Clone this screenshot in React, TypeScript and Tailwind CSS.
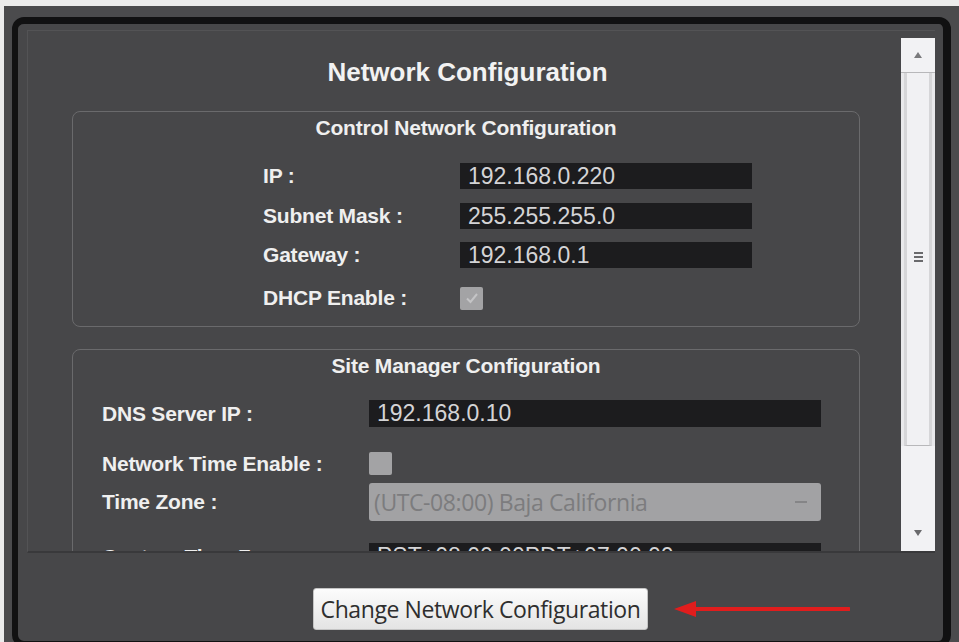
import React from "react";

const label = "font-bold text-[21px] leading-[24px] text-[#efefef] tracking-[-0.2px]";
const input =
  "bg-[#1c1c1e] text-[#d4d4d6] text-[23px] leading-none flex items-center pl-[8px] tracking-[0px]";

function Check({ checked }: { checked?: boolean }) {
  return (
    <div className="w-[23px] h-[23px] bg-[#a3a3a5] rounded-[2px] flex items-center justify-center">
      {checked && (
        <svg width="14" height="14" viewBox="0 0 14 14">
          <path d="M2 7.5 L5.5 11 L12 3" stroke="#c4c4c6" strokeWidth="2" fill="none" />
        </svg>
      )}
    </div>
  );
}

export default function App() {
  return (
    <div
      className="w-[959px] h-[642px] bg-[#ececec] overflow-hidden pt-[6px] pl-[4px]"
      style={{ fontFamily: '"Liberation Sans", Arial, sans-serif' }}
    >
      <div className="w-[955px] h-[636px] bg-[#4b4b4d] pt-[11px] pl-[8px]">
        <div className="w-[939px] h-[630px] rounded-[12px] border-[6px] border-t-[7px] border-r-[8px] border-[#111112] bg-[#474749] flex flex-col">
          {/* scroll area */}
          <div className="ml-[9px] mt-[6px] w-[908px] h-[523px] flex border-t border-l border-[#535355] border-b-2 border-b-[#39393b]">
            <div className="flex-1 overflow-hidden">
              <div className="mt-[26px] text-center font-bold text-[26px] leading-[30px] text-[#f2f2f2] pl-[6px]">
                Network Configuration
              </div>

              {/* Control Network */}
              <div className="mt-[24px] ml-[44px] w-[788px] h-[216px] border border-[#6a6a6c] rounded-[8px]">
                <div className={`mt-[4px] text-center ${label}`}>Control Network Configuration</div>
                <div className="mt-[23px] pl-[190px] flex items-center h-[26px]">
                  <div className={`w-[197px] ${label}`}>IP :</div>
                  <div className={`w-[292px] h-[26px] ${input}`}>192.168.0.220</div>
                </div>
                <div className="mt-[14px] pl-[190px] flex items-center h-[26px]">
                  <div className={`w-[197px] ${label}`}>Subnet Mask :</div>
                  <div className={`w-[292px] h-[26px] ${input}`}>255.255.255.0</div>
                </div>
                <div className="mt-[13px] pl-[190px] flex items-center h-[26px]">
                  <div className={`w-[197px] ${label}`}>Gateway :</div>
                  <div className={`w-[292px] h-[26px] ${input}`}>192.168.0.1</div>
                </div>
                <div className="mt-[17px] pl-[190px] flex items-center h-[26px]">
                  <div className={`w-[197px] ${label}`}>DHCP Enable :</div>
                  <Check checked />
                </div>
              </div>

              {/* Site Manager */}
              <div className="mt-[22px] ml-[44px] w-[788px] h-[260px] border border-[#6a6a6c] rounded-[8px]">
                <div className={`mt-[4px] text-center ${label}`}>Site Manager Configuration</div>
                <div className="mt-[22px] pl-[29px] flex items-center h-[27px]">
                  <div className={`w-[267px] ${label}`}>DNS Server IP :</div>
                  <div className={`w-[452px] h-[27px] ${input}`}>192.168.0.10</div>
                </div>
                <div className="mt-[25px] pl-[29px] flex items-center h-[23px]">
                  <div className={`w-[267px] ${label}`}>Network Time Enable :</div>
                  <Check />
                </div>
                <div className="mt-[8px] pl-[29px] flex items-center h-[38px]">
                  <div className={`w-[267px] ${label}`}>Time Zone :</div>
                  <div className="w-[452px] h-[38px] bg-[#a2a2a4] rounded-[3px] flex items-center justify-between pl-[5px] pr-[14px]">
                    <span
                      className="text-[23px] text-[#7c7c7e] tracking-[-0.4px]"
                      style={{ fontFamily: '"Open Sans", sans-serif' }}
                    >
                      (UTC-08:00) Baja California
                    </span>
                    <span className="w-[12px] h-[2px] bg-[#858587]" />
                  </div>
                </div>
                <div className="mt-[22px] pl-[29px] flex items-center h-[27px]">
                  <div className={`w-[267px] ${label}`}>Custom Time Zone :</div>
                  <div className={`w-[452px] h-[27px] ${input}`}>PST+08:00:00PDT+07:00:00</div>
                </div>
              </div>
            </div>

            {/* scrollbar */}
            <div className="mt-[7px] w-[34px] bg-[#e9e9eb] flex flex-col">
              <div className="h-[35px] flex items-center justify-center border-b border-[#b8b8ba] bg-[#f2f2f4]">
                <svg width="8" height="6" viewBox="0 0 8 6">
                  <path d="M4 0 L8 6 L0 6 Z" fill="#7a7a7c" />
                </svg>
              </div>
              <div className="mx-[3px] h-[373px] bg-[#f1f1f3] border-x-[3px] border-[#d6d6d8] border-b border-b-[#b8b8ba] flex items-center justify-center">
                <div className="flex flex-col gap-[2px] mt-[-4px]">
                  <div className="w-[9px] h-[2px] bg-[#6a6a6c]" />
                  <div className="w-[9px] h-[2px] bg-[#6a6a6c]" />
                  <div className="w-[9px] h-[2px] bg-[#6a6a6c]" />
                </div>
              </div>
              <div className="flex-1 bg-[#f2f2f4]" />
              <div className="h-[36px] flex items-center justify-center bg-[#f2f2f4]">
                <svg width="8" height="6" viewBox="0 0 8 6">
                  <path d="M0 0 L8 0 L4 6 Z" fill="#6a6a6c" />
                </svg>
              </div>
            </div>
          </div>

          {/* bottom area */}
          <div className="relative mt-[35px] flex justify-center">
            <button
              className="h-[42px] w-[335px] rounded-[3px] border border-[#c4c4c4] bg-gradient-to-b from-[#fcfcfc] to-[#e4e4e4] text-[#2e2e2e] text-[23px] tracking-[-0.4px] whitespace-nowrap"
              style={{ fontFamily: '"Open Sans", sans-serif' }}
            >
              Change Network Configuration
            </button>
            <svg
              className="absolute left-[656px] top-[11px]"
              width="176"
              height="20"
              viewBox="0 0 176 20"
            >
              <path d="M20 10 L175 10" stroke="#e11d1d" strokeWidth="4" strokeLinecap="round" />
              <path d="M0 10 L22 2 L22 18 Z" fill="#e11d1d" />
            </svg>
          </div>
        </div>
      </div>
    </div>
  );
}
